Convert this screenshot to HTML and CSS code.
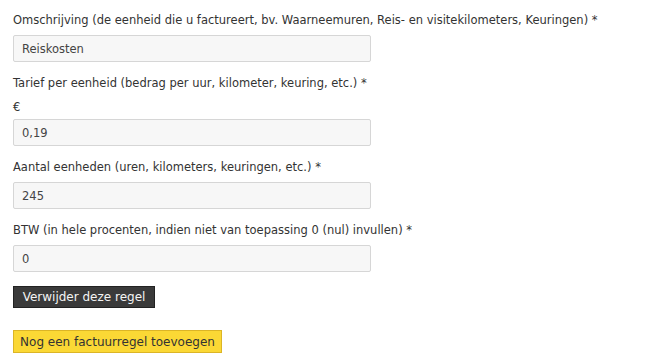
FILE: index.html
```html
<!DOCTYPE html>
<html lang="nl">
<head>
    <meta charset="UTF-8">
    <meta name="viewport" content="width=device-width, initial-scale=1.0">
    <title>Factuurregel</title>
    <link rel="stylesheet" href="styles.css">
</head>
<body>
    <form class="invoice-line">
        <div class="field">
            <label for="omschrijving">Omschrijving (de eenheid die u factureert, bv. Waarneemuren, Reis- en visitekilometers, Keuringen) *</label>
            <input type="text" id="omschrijving" value="Reiskosten">
        </div>
        <div class="field">
            <label for="tarief">Tarief per eenheid (bedrag per uur, kilometer, keuring, etc.) *</label>
            <span class="currency">€</span>
            <input type="text" id="tarief" value="0,19">
        </div>
        <div class="field">
            <label for="aantal">Aantal eenheden (uren, kilometers, keuringen, etc.) *</label>
            <input type="text" id="aantal" value="245">
        </div>
        <div class="field">
            <label for="btw">BTW (in hele procenten, indien niet van toepassing 0 (nul) invullen) *</label>
            <input type="text" id="btw" value="0">
        </div>
        <button type="button" class="remove-button">Verwijder deze regel</button>
        <button type="button" class="add-button">Nog een factuurregel toevoegen</button>
    </form>
</body>
</html>
```

FILE: styles.css
```css
body {
    margin: 0;
    padding: 11px 13px;
    font-family: "DejaVu Sans", Verdana, sans-serif;
    font-size: 11.5px;
    color: #333;
    background-color: #fff;
}

.invoice-line {
    display: flex;
    flex-direction: column;
    align-items: flex-start;
}

.field {
    display: flex;
    flex-direction: column;
    align-items: flex-start;
    margin-bottom: 12px;
}

.field label {
    line-height: 18px;
    margin-bottom: 6px;
}

.currency {
    line-height: 18px;
    margin-bottom: 3px;
}

.field input {
    box-sizing: border-box;
    width: 358px;
    height: 27px;
    padding: 0 8px;
    border: 1px solid #d6d6d6;
    border-radius: 2px;
    background-color: #f7f7f7;
    font-family: "DejaVu Sans", Verdana, sans-serif;
    font-size: 11.5px;
    color: #444;
}

.remove-button,
.add-button {
    box-sizing: border-box;
    font-family: "DejaVu Sans", Tahoma, sans-serif;
    font-size: 12px;
    border-radius: 0;
    cursor: pointer;
}

.remove-button {
    margin-top: 2px;
    height: 22px;
    width: 142px;
    background-color: #3a3a3a;
    border: 1px solid #222;
    color: #f4f4f4;
}

.add-button {
    margin-top: 22px;
    height: 23px;
    width: 209px;
    background-color: #fbd835;
    border: 1px solid #dcb526;
    color: #333;
}
```
